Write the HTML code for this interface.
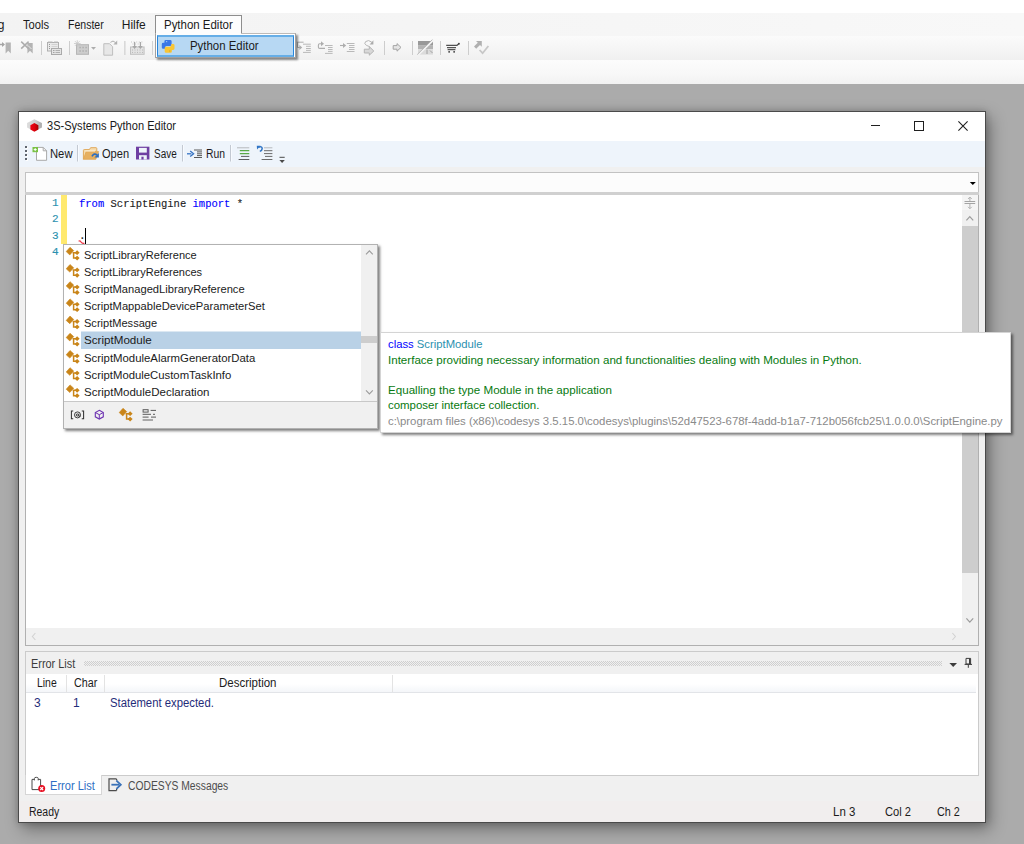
<!DOCTYPE html>
<html>
<head>
<meta charset="utf-8">
<title>3S-Systems Python Editor</title>
<style>
*{box-sizing:border-box;margin:0;padding:0}
html,body{width:1024px;height:844px;overflow:hidden}
body{background:#ababab;font-family:"Liberation Sans",sans-serif;font-size:12px;color:#1b1b1b;position:relative}
.abs{position:absolute}
.t{position:absolute;white-space:pre;line-height:14px;height:14px}
/* ---------- host app strip ---------- */
#top0{left:0;top:0;width:1024px;height:13px;background:#ffffff}
#menubar{left:0;top:13px;width:1024px;height:23px;background:linear-gradient(to right,#f3f3f3,#f5f5f5 40%,#f8f8f8)}
#tbar{left:0;top:36px;width:1024px;height:24px;background:linear-gradient(#fbfbfb,#f6f6f6 45%,#f0f0f0)}
#tbar2{left:0;top:60px;width:1024px;height:24px;background:linear-gradient(#fcfcfc,#f8f8f8 55%,#f2f2f2)}
#mtab{left:155px;top:15px;width:87px;height:21px;background:#fdfdfd;border:1px solid #8e8e8e;border-bottom:none}
#drop{left:155px;top:33px;width:141px;height:25px;background:#ffffff;border:1px solid #a0a0a0;border-top-color:#bdbab8;box-shadow:2px 2px 2px rgba(0,0,0,.45)}
#dropsel{left:157px;top:35px;width:137px;height:22px;background:#b7d8f3;border:1px solid #2786dd;border-top:2px solid #66aee7;border-bottom:2px solid #66aee7}
#tabcover{left:156px;top:33px;width:85px;height:2px;background:#fdfdfd}
/* ---------- window ---------- */
#win{left:18px;top:111px;width:968px;height:712px;background:#f0f0f0;border:1px solid #4a4a4a;box-shadow:4px 6px 15px rgba(0,0,0,.36),0 0 7px rgba(0,0,0,.2)}
#title{left:19px;top:112px;width:966px;height:29px;background:#ffffff}
#wtool{left:19px;top:141px;width:966px;height:26px;background:#eef4fb}
#combo{left:25px;top:172px;width:954px;height:21px;background:#fcfcfc;border:1px solid #c2c2c2}
#split{left:25px;top:192px;width:954px;height:3px;background:#d0d0d0}
#editor{left:25px;top:195px;width:954px;height:451px;background:#ffffff;border:1px solid #b0b0b0;border-top:none}
#ybar{left:61px;top:195px;width:6px;height:49px;background:#ffe96e}
#vscroll{left:962px;top:195px;width:16px;height:433px;background:#f0f0f0}
#vthumb{left:962px;top:226px;width:16px;height:347px;background:#cdcdcd}
#hscroll{left:26px;top:628px;width:952px;height:17px;background:#f0f0f0}
.ln{color:#2b91af;font-family:"Liberation Mono",monospace;font-size:11px;-webkit-text-stroke:.15px #2b91af}
.code{font-family:"Liberation Mono",monospace;font-size:11px;color:#1b1b1b;-webkit-text-stroke:.12px}
.kw{color:#0000ff}
/* popup */
#pop{left:63px;top:244px;width:315px;height:185px;background:#ffffff;border:1px solid #b2b2b2;box-shadow:2px 2px 2.5px rgba(0,0,0,.5)}
#popsel{left:81px;top:332px;width:280px;height:17px;background:#b9d1e6;box-shadow:0 -1px 0 rgba(185,209,230,.5)}
#popscroll{left:361px;top:245px;width:16px;height:156px;background:#f0f0f0}
#popthumb{left:361px;top:336px;width:16px;height:7px;background:#cdcdcd}
#popbar{left:64px;top:401px;width:313px;height:27px;background:#f0f0f0;border-top:1px solid #c8c8c8}
.pi{position:absolute;white-space:pre;font-size:11.5px;line-height:14px;height:14px;left:84px;color:#1b1b1b}
/* tooltip */
#tip{left:380px;top:332px;width:631px;height:101px;background:#ffffff;border:1px solid #d4d4d4;box-shadow:2px 2px 2.5px rgba(0,0,0,.5)}
.tl{position:absolute;white-space:pre;font-size:11.5px;line-height:14px;height:14px;left:388px}
.g{color:#077a10}
/* error list */
#err{left:25px;top:651px;width:954px;height:125px;background:#f0f0f0;border:1px solid #cbcbcb}
#errhead{left:26px;top:674px;width:950px;height:19px;background:linear-gradient(#ffffff 55%,#f4f6f9);border-bottom:1px solid #e2e4e8}
#errbody{left:26px;top:674px;width:952px;height:101px;background:#ffffff}
#tabA{left:25px;top:775px;width:77px;height:20px;background:#ffffff;border:1px solid #d6d6d6;border-top:none}
#status{left:19px;top:801px;width:966px;height:21px;background:#f1eeee}
.nav{color:#1f2d7a}
/*FIT-START*/
#m_tools{left:23.00px!important;top:18.00px!important;transform:scaleX(0.9286);transform-origin:0 0}
#m_fenster{left:67.50px!important;top:18.00px!important;transform:scaleX(0.8780);transform-origin:0 0}
#m_hilfe{left:121.75px!important;top:18.00px!important;transform:scaleX(1.0000);transform-origin:0 0}
#m_py{left:164.25px!important;top:18.00px!important;transform:scaleX(0.9549);transform-origin:0 0}
#d_py{left:190.00px!important;top:39.00px!important;transform:scaleX(0.9514);transform-origin:0 0}
#w_title{left:47.25px!important;top:119.00px!important;transform:scaleX(0.9211);transform-origin:0 0}
#b_new{left:50.00px!important;top:147.00px!important;transform:scaleX(0.9375);transform-origin:0 0}
#b_open{left:102.00px!important;top:147.00px!important;transform:scaleX(0.9224);transform-origin:0 0}
#b_save{left:153.60px!important;top:147.00px!important;transform:scaleX(0.8296);transform-origin:0 0}
#b_run{left:206.00px!important;top:147.00px!important;transform:scaleX(0.8636);transform-origin:0 0}
#c_line1{left:79.00px!important;top:197.00px!important;transform:scaleX(0.9556);transform-origin:0 0}
#p1{left:84.20px!important;top:248.00px!important;transform:scaleX(0.9581);transform-origin:0 0}
#p2{left:84.20px!important;top:265.00px!important;transform:scaleX(0.9569);transform-origin:0 0}
#p3{left:84.20px!important;top:282.00px!important;transform:scaleX(0.9702);transform-origin:0 0}
#p4{left:84.20px!important;top:299.00px!important;transform:scaleX(0.9720);transform-origin:0 0}
#p5{left:84.20px!important;top:316.00px!important;transform:scaleX(0.9612);transform-origin:0 0}
#p6{left:84.20px!important;top:333.00px!important;transform:scaleX(1.0104);transform-origin:0 0}
#p7{left:84.20px!important;top:351.00px!important;transform:scaleX(0.9888);transform-origin:0 0}
#p8{left:84.20px!important;top:368.00px!important;transform:scaleX(0.9847);transform-origin:0 0}
#p9{left:84.20px!important;top:385.00px!important;transform:scaleX(1.0016);transform-origin:0 0}
#tl1{left:388.00px!important;top:337.00px!important;transform:scaleX(0.9802);transform-origin:0 0}
#tl2{left:388.00px!important;top:353.00px!important;transform:scaleX(1.0068);transform-origin:0 0}
#tl4{left:388.00px!important;top:383.00px!important;transform:scaleX(1.0090);transform-origin:0 0}
#tl5{left:388.00px!important;top:398.00px!important;transform:scaleX(0.9947);transform-origin:0 0}
#tl6{left:388.00px!important;top:414.00px!important;transform:scaleX(0.9889);transform-origin:0 0}
#e_title{left:31.00px!important;top:657.00px!important;transform:scaleX(0.9082);transform-origin:0 0}
#e_line{left:37.00px!important;top:676.00px!important;transform:scaleX(0.8696);transform-origin:0 0}
#e_char{left:73.75px!important;top:676.00px!important;transform:scaleX(0.8942);transform-origin:0 0}
#e_desc{left:219.00px!important;top:676.00px!important;transform:scaleX(0.9583);transform-origin:0 0}
#e_msg{left:110.00px!important;top:696.00px!important;transform:scaleX(0.9432);transform-origin:0 0}
#t_err{left:50.33px!important;top:779.00px!important;transform:scaleX(0.9219);transform-origin:0 0}
#t_cod{left:127.50px!important;top:779.00px!important;transform:scaleX(0.8590);transform-origin:0 0}
#s_ready{left:28.80px!important;top:805.00px!important;transform:scaleX(0.8714);transform-origin:0 0}
#s_ln{left:833.00px!important;top:805.00px!important;transform:scaleX(0.9565);transform-origin:0 0}
#s_col{left:885.00px!important;top:805.00px!important;transform:scaleX(0.9286);transform-origin:0 0}
#s_ch{left:937.00px!important;top:805.00px!important;transform:scaleX(0.9000);transform-origin:0 0}
/*FIT-END*/
</style>
</head>
<body>
<!-- host application strip -->
<div class="abs" id="top0"></div>
<div class="abs" id="menubar"></div>
<div class="abs" id="tbar"></div>
<div class="abs" id="tbar2"></div>
<div class="abs" id="mtab"></div>
<div class="t" style="left:-2.3px;top:18px">g</div>
<div class="t" id="m_tools" style="left:23px;top:18px">Tools</div>
<div class="t" id="m_fenster" style="left:67px;top:18px">Fenster</div>
<div class="t" id="m_hilfe" style="left:121px;top:18px">Hilfe</div>
<div class="t" id="m_py" style="left:164px;top:18px">Python Editor</div>
<svg class="abs" style="left:0;top:0" width="1024" height="84" viewBox="0 0 1024 84">
<g fill="none" stroke="#a9a9a9" stroke-width="1" opacity=".9">
 <!-- bookmark + arrow -->
 <path d="M0 44.5H4" stroke="#9d9d9d" stroke-width="1.4"/><path d="M2 42L5 44.5L2 47Z" fill="#9d9d9d" stroke="none"/>
 <path d="M5.6 42.6H10.8V53.4L8.2 50.8L5.6 53.4Z" fill="#adadad" stroke="none"/>
 <!-- bookmark + x -->
 <path d="M27.4 43H32.7V53.4L30 50.8L27.4 53.4Z" fill="#adadad" stroke="none"/>
 <path d="M21.2 41.6L28.6 48.6M28.6 41.6L21.2 48.6" stroke="#a6a6a6" stroke-width="1.5"/>
 <path d="M28 45.5L31.5 49" stroke="#e8e8e8" stroke-width="1"/>
 <rect x="41" y="41" width="1" height="14" fill="#c9c9c9" stroke="none"/>
 <!-- windows -->
 <rect x="47.5" y="42.5" width="11" height="8.5" fill="#e9e9e9" stroke="#a8a8a8"/>
 <path d="M48 42H52.5M54 42H58" stroke="#b4b4b4"/>
 <path d="M49 44.5H50M49 46.5H50M49 48.5H50" stroke="#8f8f8f"/><path d="M51.5 44.5H57.5M51.5 46.5H57.5" stroke="#cfcfcf"/>
 <rect x="51.5" y="48.5" width="10" height="6" fill="#e3e3e3" stroke="#a3a3a3"/>
 <path d="M53 50.5H54.5M53 52.5H54.5" stroke="#9a9a9a"/><path d="M55.5 50.5H60M55.5 52.5H60" stroke="#a9a9a9"/>
 <rect x="69" y="41" width="1" height="14" fill="#c9c9c9" stroke="none"/>
 <!-- grid with sparkle -->
 <rect x="76.5" y="44.7" width="12" height="9.6" fill="#c9c9c9" stroke="#b0b0b0"/>
 <path d="M79.5 47.5H80.7M82.5 47.5H83.7M85.5 47.5H86.7M79.5 51H80.7M82.5 51H83.7M85.5 51H86.7" stroke="#a0a0a0" stroke-width="1.4"/>
 <path d="M77.3 40.3V46.8M74 43.5H80.6M75 41.2L79.6 45.8M79.6 41.2L75 45.8" stroke="#c2c2c2" stroke-width=".8"/>
 <path d="M91 47H96L93.5 49.7Z" fill="#a6a6a6" stroke="none"/>
 <!-- page with arrow -->
 <path d="M103.8 43.7H109.6L112.6 46.7V55.2H103.8Z" fill="#e6e6e6" stroke="#b9b9b9"/>
 <path d="M110.4 42.4Q113 39.6 115.6 42.6" stroke="#a9a9a9" stroke-width="1"/><path d="M117.2 40.4V44.4H113.4Z" fill="#a9a9a9" stroke="none"/>
 <rect x="124" y="41" width="1.6" height="14" fill="#d6d6d6" stroke="none"/><rect x="152" y="41" width="1" height="14" fill="#d0d0d0" stroke="none"/>
 <!-- dotted arrows -->
 <rect x="130.5" y="47" width="13.6" height="7.3" fill="#e2e2e2" stroke="#bcbcbc"/>
 <path d="M131 42H144M132.5 44H143" stroke="#c4c4c4" stroke-dasharray="1 1.6"/>
 <path d="M132 50H143M132 52.4H143" stroke="#b0b0b0" stroke-dasharray="1 1.5"/>
 <path d="M134.6 42V47.5M140.4 42V47.5" stroke="#a0a0a0" stroke-width="1.2"/>
 <path d="M132.2 46H137L134.6 49ZM138 46H142.8L140.4 49Z" fill="#a0a0a0" stroke="none"/>
 <!-- step into -->
 <path d="M303 44.2H310.8M306 46.3H310.8M306 48.5H310.8M306 50.4H310.8M303 52.4H310.8" stroke="#b3b3b3"/>
 <path d="M296.8 42.2H303.6M297.5 42.2V47.5H300" stroke="#a6a6a6"/><path d="M299.4 45L302.2 47.5L299.4 50Z" fill="#a6a6a6" stroke="none"/>
 <!-- step over -->
 <path d="M325 45.5H332.6M328 47.5H332.6M328 49.5H332.6M328 51.4H332.6M325 53.4H332.6" stroke="#b3b3b3"/>
 <path d="M325 48.4H319.6Q318.4 48.4 318.4 47.2V45Q318.4 43.8 319.6 43.8H321.5" stroke="#a6a6a6" stroke-width="1.1"/><path d="M321 41.2L324 43.8L321 46.3Z" fill="#a6a6a6" stroke="none"/>
 <!-- run to -->
 <path d="M340 45.5H344" stroke="#a6a6a6" stroke-width="1.1"/><path d="M343 43L346.2 45.5L343 48Z" fill="#a6a6a6" stroke="none"/>
 <path d="M346.8 43.5H354.5M349 45.5H354.5M349 47.5H354.5M349 49.5H354.5M346.8 51.5H354.5" stroke="#b3b3b3"/>
 <!-- cycle arrow -->
 <path d="M364.3 49.2H369.3V46.6L373.8 51L369.3 55.2V53H364.3Z" fill="#d6d6d6" stroke="#adadad"/>
 <path d="M371.8 42.2Q368.5 39.2 365.6 41.6Q363.6 43.6 366.4 45.4L369.6 46.6" stroke="#b0b0b0" stroke-width="1"/><path d="M373.4 40.2V44.4H369.6Z" fill="#a3a3a3" stroke="none"/>
 <rect x="384" y="41" width="1" height="14" fill="#c9c9c9" stroke="none"/>
 <!-- hollow arrow -->
 <path d="M393.2 45.6H397V43.6L401 47.4L397 51.2V49.2H393.2Z" fill="#e4e4e4" stroke="#9c9c9c"/>
 <rect x="412" y="41" width="1" height="14" fill="#c9c9c9" stroke="none"/>
 <!-- flag box -->
 <rect x="418" y="41" width="15" height="4.6" fill="#8f8f8f" stroke="none"/>
 <rect x="418" y="45.6" width="15" height="3.6" fill="#adadad" stroke="none"/>
 <rect x="418" y="49.2" width="15" height="5.4" fill="#d9d9d9" stroke="none"/>
 <path d="M427 49.5V54M430 50.5L432.5 53" stroke="#9a9a9a"/>
 <path d="M417.4 56L428.5 44.5L433.6 39.4V54.8H433" stroke="none"/>
 <path d="M418 55.2L433.4 40" stroke="#f4f4f4" stroke-width="1.8"/><path d="M417.2 54.6L432.4 39.6" stroke="#a4a4a4" stroke-width=".8"/>
 <rect x="440" y="41" width="1" height="14" fill="#c9c9c9" stroke="none"/>
 <!-- cart -->
 <path d="M446.2 45.3H457L458.6 44" stroke="#3d3d3d" stroke-width="1.15"/><circle cx="458.9" cy="43.7" r=".95" fill="#2f2f2f" stroke="none"/>
 <path d="M447 47.6H456M447.6 49.6H455.4" stroke="#444" stroke-width="1.05"/>
 <rect x="448.3" y="51" width="1.7" height="1.7" fill="#4a4a4a" stroke="none"/><rect x="453.3" y="51" width="1.7" height="1.7" fill="#4a4a4a" stroke="none"/>
 <rect x="468" y="41" width="1" height="14" fill="#c9c9c9" stroke="none"/>
 <!-- arrow + check -->
 <path d="M476 41H481.8V46.8L480 45L476.2 48.8L474 46.6L477.8 42.8Z" fill="#a9a9a9" stroke="none"/>
 <path d="M479.6 50L482.6 53.2L488.4 46" stroke="#c3c3c3" stroke-width="1.8"/>
</g>
</svg>
<div class="abs" id="drop"></div>
<div class="abs" id="dropsel"></div>
<div class="abs" id="tabcover"></div>
<div class="t" id="d_py" style="left:190px;top:39px">Python Editor</div>
<svg class="abs" style="left:158px;top:37px" width="20" height="18" viewBox="158 37 20 18">
<path id="pyb" d="M165.8 39.9h4.4a1.4 1.4 0 0 1 1.4 1.4v3.3a1.4 1.4 0 0 1-1.4 1.4h-3.6a1.6 1.6 0 0 0-1.6 1.6v1.2h-1.8a1.4 1.4 0 0 1-1.4-1.4v-3.2a1.4 1.4 0 0 1 1.4-1.4h1.2v-1.5a1.4 1.4 0 0 1 1.4-1.4z" fill="#3a77e8"/>
<path d="M165.8 39.9h4.4a1.4 1.4 0 0 1 1.4 1.4v3.3a1.4 1.4 0 0 1-1.4 1.4h-3.6a1.6 1.6 0 0 0-1.6 1.6v1.2h-1.8a1.4 1.4 0 0 1-1.4-1.4v-3.2a1.4 1.4 0 0 1 1.4-1.4h1.2v-1.5a1.4 1.4 0 0 1 1.4-1.4z" fill="#f9c535" transform="rotate(180 168.15 46.35)"/>
<rect x="166" y="41" width="1.2" height="1.2" fill="#9cc0f4"/><rect x="169.2" y="50.4" width="1.2" height="1.2" fill="#d9a520"/>
</svg>

<!-- editor window -->
<div class="abs" id="win"></div>
<div class="abs" id="title"></div>
<div class="t" id="w_title" style="left:47px;top:119px">3S-Systems Python Editor</div>
<svg class="abs" style="left:19px;top:112px" width="966" height="29" viewBox="19 112 966 29">
<defs>
<linearGradient id="gg" x1="0" x2="1" y1="0" y2="0"><stop offset="0" stop-color="#dedede"/><stop offset=".55" stop-color="#cfcfcf"/><stop offset="1" stop-color="#a9a9a9"/></linearGradient>
<linearGradient id="rg" x1="0" x2="1" y1="0" y2="0"><stop offset="0" stop-color="#ea0414"/><stop offset=".5" stop-color="#e0000c"/><stop offset="1" stop-color="#a40000"/></linearGradient>
</defs>
<path d="M34.4 119.2L41.9 123.1V127.6L36 130.4H32.8L27 127.6V123.1Z" fill="url(#gg)"/>
<path d="M34.4 123.1L38.4 125.2V129.6L34.4 131.7L30.4 129.6V125.2Z" fill="url(#rg)"/>
<path d="M871 125.5H880" stroke="#1f1f1f" stroke-width="1"/>
<rect x="914.5" y="121.5" width="9" height="9" fill="none" stroke="#1f1f1f" stroke-width="1"/>
<path d="M958.4 121.4L967.6 130.6M967.6 121.4L958.4 130.6" stroke="#1f1f1f" stroke-width="1.1"/>
</svg>
<div class="abs" id="wtool"></div>
<div class="t" id="b_new" style="left:50px;top:147px">New</div>
<div class="t" id="b_open" style="left:102px;top:147px">Open</div>
<div class="t" id="b_save" style="left:153px;top:147px">Save</div>
<div class="t" id="b_run" style="left:206px;top:147px">Run</div>
<svg class="abs" style="left:19px;top:141px" width="300" height="26" viewBox="19 141 300 26">
<!-- grip -->
<g fill="#ffffff"><rect x="26" y="147" width="2" height="2"/><rect x="26" y="151" width="2" height="2"/><rect x="26" y="155" width="2" height="2"/><rect x="26" y="159" width="2" height="2"/></g>
<g fill="#5f656e"><rect x="25" y="146" width="2" height="2"/><rect x="25" y="150" width="2" height="2"/><rect x="25" y="154" width="2" height="2"/><rect x="25" y="158" width="2" height="2"/></g>
<!-- new -->
<path d="M36.5 147.4H43.2L46.6 150.8V160.3H36.5Z" fill="#ffffff" stroke="#a9a9a9" stroke-width="1"/>
<path d="M43.2 147.4V150.8H46.6" fill="none" stroke="#a9a9a9" stroke-width="1"/>
<rect x="32.5" y="147" width="5.5" height="5.2" fill="#79c143"/>
<path d="M35.2 148.1V151.1M33.7 149.6H36.7" stroke="#ffffff" stroke-width="1"/>
<rect x="77" y="145" width="1" height="16.5" fill="#c3c9d2"/><rect x="78" y="145" width="1" height="16.5" fill="#f8fbff"/>
<!-- open -->
<path d="M83.4 159.3V150.4Q83.4 149.6 84.2 149.6H89.4L90.6 147.7H96Q96.8 147.7 96.8 148.5V151.4" fill="#f6dcae" stroke="#e0a85a" stroke-width="1"/>
<path d="M83.4 159.3L86.2 151.6H98.6L95.8 159.3Z" fill="#e6b060" stroke="#dfa653" stroke-width=".8"/>
<path d="M85 150.6H95V151.4H86Z" fill="#fdf3de"/>
<path d="M92 156.4Q94 152.6 97 155" fill="none" stroke="#2e6fc0" stroke-width="1.7"/><path d="M98.9 152.9V157.6H94.4Z" fill="#2e6fc0"/>
<!-- save -->
<rect x="136" y="146.7" width="13.4" height="12.8" fill="#6f3fa2"/>
<rect x="139" y="147.9" width="7.8" height="4.7" fill="#eef4fb"/>
<rect x="139" y="155.2" width="7.8" height="4.3" fill="#eef4fb"/>
<rect x="141.4" y="156.7" width="2.2" height="2.8" fill="#6f3fa2"/>
<rect x="182" y="145" width="1" height="16.5" fill="#c3c9d2"/><rect x="183" y="145" width="1" height="16.5" fill="#f8fbff"/>
<!-- run -->
<path d="M187 153.8H191.4" stroke="#3573c4" stroke-width="1.3"/><path d="M190.2 151L193.6 153.8L190.2 156.6" fill="none" stroke="#3573c4" stroke-width="1.3"/>
<path d="M194 150H202M197 151.9H202M197 153.8H202M197 155.6H202M194 157.5H202" stroke="#5a5a5a" stroke-width="1"/>
<rect x="230" y="145" width="1" height="16.5" fill="#c3c9d2"/><rect x="231" y="145" width="1" height="16.5" fill="#f8fbff"/>
<!-- indent -->
<path d="M237 147.8H249.3" stroke="#b5b8bd" stroke-width="1"/>
<path d="M239.8 150.7H249.3M239.8 153.6H249.3" stroke="#5aaa46" stroke-width="1.2"/>
<path d="M241 156.4H249.3M238.6 159.5H249.3" stroke="#5e5e5e" stroke-width="1"/>
<!-- comment -->
<path d="M264 147.8H272.4" stroke="#b5b8bd" stroke-width="1"/>
<path d="M264 150.7H272.4M264 153.6H272.4M265 156.4H272.4M261.6 159.5H272.4" stroke="#6a6a6a" stroke-width="1"/>
<path d="M258.4 147.2Q262 145.8 262.2 148.6Q262.2 150.6 259.8 151.4" fill="none" stroke="#2f74c5" stroke-width="1.5"/><path d="M256.8 145.8H260.6L257 149.4Z" fill="#2f74c5"/>
<!-- overflow -->
<path d="M279.5 157.3H284.7" stroke="#4a4a4a" stroke-width="1"/><path d="M279.4 160H284.8L282.1 162.9Z" fill="#4a4a4a"/>
</svg>
<div class="abs" id="combo"></div>
<div class="abs" id="split"></div>
<div class="abs" id="editor"></div>
<div class="abs" id="ybar"></div>
<div class="abs" id="vscroll"></div>
<div class="abs" id="vthumb"></div>
<div class="abs" id="hscroll"></div>
<svg class="abs" style="left:19px;top:168px" width="966" height="480" viewBox="19 168 966 480">
<!-- combo arrow -->
<path d="M969.8 182.1H975.8L972.8 185Z" fill="#000"/>
<!-- split button -->
<rect x="962" y="195" width="16" height="15" fill="#f5f5f5"/>
<path d="M964.5 201.5H975.2M964.5 203.5H975.2" stroke="#a4a4a4" stroke-width="1"/>
<path d="M969.9 197.4V201M969.9 204V208.4" stroke="#b0b0b0" stroke-width="1"/>
<path d="M968 199L969.9 197L971.8 199M968 206.8L969.9 208.8L971.8 206.8" fill="none" stroke="#b0b0b0" stroke-width=".9"/>
<!-- up chevron -->
<path d="M966.4 220.4L969.8 216.6L973.2 220.4" fill="none" stroke="#9c9c9c" stroke-width="1.2"/>
<!-- down chevron -->
<path d="M966.4 618.4L969.8 622.2L973.2 618.4" fill="none" stroke="#9c9c9c" stroke-width="1.2"/>
<!-- h arrows -->
<path d="M35.4 633L32.4 636.5L35.4 640" fill="none" stroke="#d2d2d2" stroke-width="1.1"/>
<path d="M952.4 633L955.4 636.5L952.4 640" fill="none" stroke="#d2d2d2" stroke-width="1.1"/>
</svg>
<div class="t ln" style="left:52px;top:196px">1</div>
<div class="t ln" style="left:52px;top:212px">2</div>
<div class="t ln" style="left:52px;top:229px">3</div>
<div class="t ln" style="left:52px;top:245px">4</div>
<div class="t code" id="c_line1" style="left:79px;top:196px"><span class="kw">from</span> ScriptEngine <span class="kw">import</span> *</div>
<div class="t code" style="left:79px;top:229px">.</div>
<div class="abs" style="left:85px;top:228px;width:1px;height:16px;background:#000"></div>
<svg class="abs" style="left:76px;top:238px" width="12" height="8" viewBox="76 238 12 8"><path d="M78.6 241.2Q80 240.4 81 242Q82 243.8 84.4 243.4" fill="none" stroke="#f03a4a" stroke-width="1.3"/></svg>

<!-- error list -->
<div class="abs" id="err"></div>
<div class="abs" id="errbody"></div>
<div class="abs" id="errhead"></div>
<div class="abs" id="tabA"></div>
<div class="t" id="e_title" style="left:31px;top:657px;color:#3c3c3c">Error List</div>
<svg class="abs" style="left:19px;top:650px" width="966" height="150" viewBox="19 650 966 150">
<defs><pattern id="dots" x="83" y="661" width="2" height="2" patternUnits="userSpaceOnUse"><rect x="0" y="0" width="1" height="1" fill="#cfcfcf"/><rect x="1" y="1" width="1" height="1" fill="#cfcfcf"/></pattern></defs>
<rect x="84" y="661" width="858" height="5" fill="url(#dots)"/>
<path d="M949.4 663H957L953.2 667Z" fill="#3c3c3c"/>
<path d="M966 658.4H970.6V664H966ZM964.6 664.4H972M968.3 664.4V667.8" fill="none" stroke="#3c3c3c" stroke-width="1"/><rect x="969" y="658.4" width="1.4" height="5.6" fill="#3c3c3c"/>
<!-- column separators -->
<rect x="66" y="675" width="1" height="17" fill="#e3e3e3"/><rect x="104" y="675" width="1" height="17" fill="#e3e3e3"/><rect x="392" y="675" width="1" height="17" fill="#e3e3e3"/>
<!-- clipboard -->
<path d="M32 779.4H34.6M38 779.4H40.6V789.6H32V779.4" fill="#ffffff" stroke="#4b4b4b" stroke-width="1"/>
<path d="M34.4 780.4V778.4Q34.4 777.3 36.3 777.3Q38.2 777.3 38.2 778.4V780.4" fill="#ffffff" stroke="#4b4b4b" stroke-width="1"/>
<circle cx="41.7" cy="788.6" r="3.5" fill="#e81123"/>
<path d="M40.3 787.2L43.1 790M43.1 787.2L40.3 790" stroke="#ffffff" stroke-width="1.2"/>
<!-- messages icon -->
<path d="M116.6 778.9H109V790.6H116.6" fill="none" stroke="#4b4b4b" stroke-width="1.2"/><path d="M116.6 778.9V780.6M116.6 788.9V790.6" stroke="#4b4b4b" stroke-width="1.2"/>
<path d="M111.4 784.7H119" stroke="#3a72b8" stroke-width="1.8"/><path d="M116.4 780.6L120.8 784.7L116.4 788.9" fill="none" stroke="#3a72b8" stroke-width="1.8"/>
</svg>
<div class="t" id="e_line" style="left:37px;top:678px">Line</div>
<div class="t" id="e_char" style="left:74px;top:678px">Char</div>
<div class="t" id="e_desc" style="left:219px;top:678px">Description</div>
<div class="t nav" style="left:34px;top:696px">3</div>
<div class="t nav" style="left:73px;top:696px">1</div>
<div class="t nav" id="e_msg" style="left:110px;top:696px">Statement expected.</div>
<div class="t" id="t_err" style="left:51px;top:779px;color:#2f6fc4">Error List</div>
<div class="t" id="t_cod" style="left:127px;top:779px;color:#4d4d4d">CODESYS Messages</div>
<div class="abs" id="status"></div>
<div class="t" id="s_ready" style="left:29px;top:805px">Ready</div>
<div class="t" id="s_ln" style="left:833px;top:805px">Ln 3</div>
<div class="t" id="s_col" style="left:885px;top:805px">Col 2</div>
<div class="t" id="s_ch" style="left:937px;top:805px">Ch 2</div>

<!-- completion popup -->
<div class="abs" id="pop"></div>
<div class="abs" id="popsel"></div>
<div class="abs" id="popscroll"></div>
<div class="abs" id="popthumb"></div>
<div class="abs" id="popbar"></div>
<div class="pi" id="p1" style="top:247px">ScriptLibraryReference</div>
<div class="pi" id="p2" style="top:264px">ScriptLibraryReferences</div>
<div class="pi" id="p3" style="top:281px">ScriptManagedLibraryReference</div>
<div class="pi" id="p4" style="top:299px">ScriptMappableDeviceParameterSet</div>
<div class="pi" id="p5" style="top:316px">ScriptMessage</div>
<div class="pi" id="p6" style="top:333px">ScriptModule</div>
<div class="pi" id="p7" style="top:350px">ScriptModuleAlarmGeneratorData</div>
<div class="pi" id="p8" style="top:368px">ScriptModuleCustomTaskInfo</div>
<div class="pi" id="p9" style="top:385px">ScriptModuleDeclaration</div>
<svg class="abs" style="left:64px;top:244px" width="316" height="186" viewBox="64 244 316 186">
<g transform="translate(0 0.0)" fill="#c98519" stroke="#c98519"><path d="M70 247.3L73.7 250.6L69.8 254.9L66.2 251.6Z" stroke-width=".6"/><path d="M72.6 252.7H76M73.6 252.7V258.1H76" fill="none" stroke-width="1.5"/><path d="M77.1 250.3L79.6 252.7L77.1 255.1L74.7 252.7Z" stroke="none"/><path d="M77.1 255.7L79.6 258.1L77.1 260.5L74.7 258.1Z" stroke="none"/></g>
<g transform="translate(0 17.2)" fill="#c98519" stroke="#c98519"><path d="M70 247.3L73.7 250.6L69.8 254.9L66.2 251.6Z" stroke-width=".6"/><path d="M72.6 252.7H76M73.6 252.7V258.1H76" fill="none" stroke-width="1.5"/><path d="M77.1 250.3L79.6 252.7L77.1 255.1L74.7 252.7Z" stroke="none"/><path d="M77.1 255.7L79.6 258.1L77.1 260.5L74.7 258.1Z" stroke="none"/></g>
<g transform="translate(0 34.4)" fill="#c98519" stroke="#c98519"><path d="M70 247.3L73.7 250.6L69.8 254.9L66.2 251.6Z" stroke-width=".6"/><path d="M72.6 252.7H76M73.6 252.7V258.1H76" fill="none" stroke-width="1.5"/><path d="M77.1 250.3L79.6 252.7L77.1 255.1L74.7 252.7Z" stroke="none"/><path d="M77.1 255.7L79.6 258.1L77.1 260.5L74.7 258.1Z" stroke="none"/></g>
<g transform="translate(0 51.6)" fill="#c98519" stroke="#c98519"><path d="M70 247.3L73.7 250.6L69.8 254.9L66.2 251.6Z" stroke-width=".6"/><path d="M72.6 252.7H76M73.6 252.7V258.1H76" fill="none" stroke-width="1.5"/><path d="M77.1 250.3L79.6 252.7L77.1 255.1L74.7 252.7Z" stroke="none"/><path d="M77.1 255.7L79.6 258.1L77.1 260.5L74.7 258.1Z" stroke="none"/></g>
<g transform="translate(0 68.8)" fill="#c98519" stroke="#c98519"><path d="M70 247.3L73.7 250.6L69.8 254.9L66.2 251.6Z" stroke-width=".6"/><path d="M72.6 252.7H76M73.6 252.7V258.1H76" fill="none" stroke-width="1.5"/><path d="M77.1 250.3L79.6 252.7L77.1 255.1L74.7 252.7Z" stroke="none"/><path d="M77.1 255.7L79.6 258.1L77.1 260.5L74.7 258.1Z" stroke="none"/></g>
<g transform="translate(0 86.0)" fill="#c98519" stroke="#c98519"><path d="M70 247.3L73.7 250.6L69.8 254.9L66.2 251.6Z" stroke-width=".6"/><path d="M72.6 252.7H76M73.6 252.7V258.1H76" fill="none" stroke-width="1.5"/><path d="M77.1 250.3L79.6 252.7L77.1 255.1L74.7 252.7Z" stroke="none"/><path d="M77.1 255.7L79.6 258.1L77.1 260.5L74.7 258.1Z" stroke="none"/></g>
<g transform="translate(0 103.2)" fill="#c98519" stroke="#c98519"><path d="M70 247.3L73.7 250.6L69.8 254.9L66.2 251.6Z" stroke-width=".6"/><path d="M72.6 252.7H76M73.6 252.7V258.1H76" fill="none" stroke-width="1.5"/><path d="M77.1 250.3L79.6 252.7L77.1 255.1L74.7 252.7Z" stroke="none"/><path d="M77.1 255.7L79.6 258.1L77.1 260.5L74.7 258.1Z" stroke="none"/></g>
<g transform="translate(0 120.4)" fill="#c98519" stroke="#c98519"><path d="M70 247.3L73.7 250.6L69.8 254.9L66.2 251.6Z" stroke-width=".6"/><path d="M72.6 252.7H76M73.6 252.7V258.1H76" fill="none" stroke-width="1.5"/><path d="M77.1 250.3L79.6 252.7L77.1 255.1L74.7 252.7Z" stroke="none"/><path d="M77.1 255.7L79.6 258.1L77.1 260.5L74.7 258.1Z" stroke="none"/></g>
<g transform="translate(0 137.6)" fill="#c98519" stroke="#c98519"><path d="M70 247.3L73.7 250.6L69.8 254.9L66.2 251.6Z" stroke-width=".6"/><path d="M72.6 252.7H76M73.6 252.7V258.1H76" fill="none" stroke-width="1.5"/><path d="M77.1 250.3L79.6 252.7L77.1 255.1L74.7 252.7Z" stroke="none"/><path d="M77.1 255.7L79.6 258.1L77.1 260.5L74.7 258.1Z" stroke="none"/></g>
<path d="M366 254.4L369.4 250.8L372.8 254.4" fill="none" stroke="#9c9c9c" stroke-width="1.1"/>
<path d="M366 390.4L369.4 394L372.8 390.4" fill="none" stroke="#9c9c9c" stroke-width="1.1"/>
<path d="M73.2 411H71.4V418.8H73.2M81.8 411H83.6V418.8H81.8" fill="none" stroke="#333" stroke-width="1.05"/>
<circle cx="77.5" cy="414.9" r="3" fill="none" stroke="#333" stroke-width=".95"/><circle cx="77.4" cy="415" r="1.1" fill="none" stroke="#2e2e2e" stroke-width=".9"/><path d="M78.8 413.7V416.3H80.3" fill="none" stroke="#2e2e2e" stroke-width=".8"/>
<path d="M99.3 410.3L103.3 412.5V416.8L99.3 419L95.3 416.8V412.5Z" fill="none" stroke="#6d32b2" stroke-width="1.1"/><path d="M95.5 412.6L99.3 414.7L103.1 412.6M99.3 414.7V418.8" fill="none" stroke="#6d32b2" stroke-width="1"/>
<g transform="translate(53 161)" fill="#c98519" stroke="#c98519"><path d="M70 247.3L73.7 250.6L69.8 254.9L66.2 251.6Z" stroke-width=".6"/><path d="M72.6 252.7H76M73.6 252.7V258.1H76" fill="none" stroke-width="1.5"/><path d="M77.1 250.3L79.6 252.7L77.1 255.1L74.7 252.7Z" stroke="none"/><path d="M77.1 255.7L79.6 258.1L77.1 260.5L74.7 258.1Z" stroke="none"/></g>
<g stroke="#5a5a5a" stroke-width="1" fill="none"><rect x="143.1" y="409.7" width="5" height="2.4"/><path d="M150.6 410.4H156M142.6 414.3H151M153 414.3H155M142.6 417.1H148.6M151 417.1H156"/><path d="M142.6 420H153" stroke-width="1.4" stroke="#8a8a8a"/></g>
</svg>

<!-- tooltip -->
<div class="abs" id="tip"></div>
<div class="tl" id="tl1" style="top:337px"><span class="kw">class</span> <span style="color:#2b91af">ScriptModule</span></div>
<div class="tl g" id="tl2" style="top:353px">Interface providing necessary information and functionalities dealing with Modules in Python.</div>
<div class="tl g" id="tl4" style="top:383px">Equalling the type Module in the application</div>
<div class="tl g" id="tl5" style="top:399px">composer interface collection.</div>
<div class="tl" id="tl6" style="top:414px;color:#8a8a8a">c:\program files (x86)\codesys 3.5.15.0\codesys\plugins\52d47523-678f-4add-b1a7-712b056fcb25\1.0.0.0\ScriptEngine.py</div>
</body>
</html>
